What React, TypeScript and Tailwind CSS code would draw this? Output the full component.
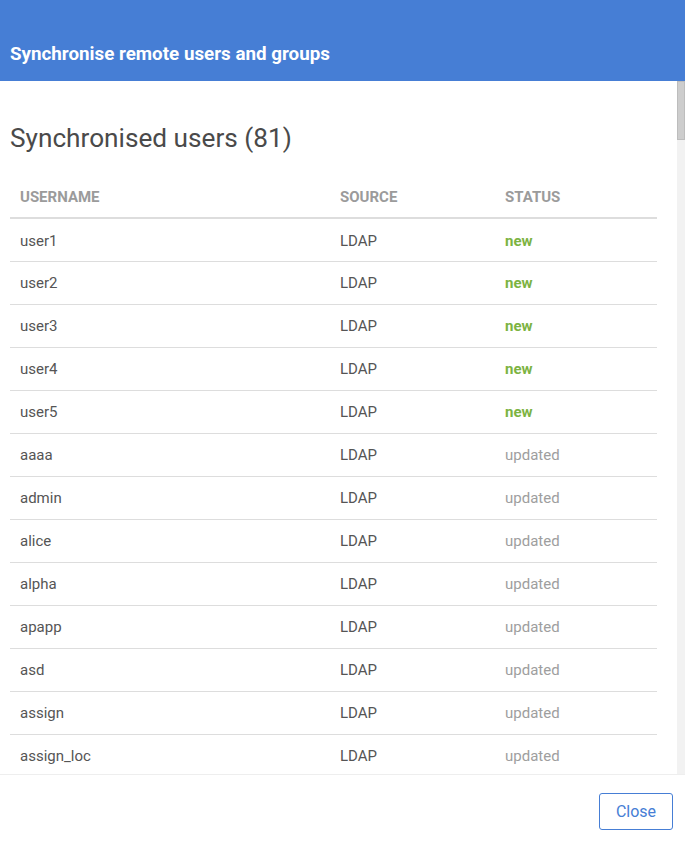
import React from "react";

type Row = { name: string; source: string; status: "new" | "updated" };

const known = [
  "aaaa", "admin", "alice", "alpha", "apapp", "asd", "assign", "assign_loc",
  "bob", "bravo", "carol", "charlie", "dave", "delta", "demo", "echo", "eve",
  "foxtrot", "frank", "golf", "grace", "guest", "heidi", "hotel", "india",
  "ivan", "judy", "juliet", "kilo", "lima", "mallory", "mike", "november",
  "oscar", "papa", "peggy", "quebec", "romeo", "sierra", "tango", "trent",
  "uniform", "victor", "walter", "whiskey", "xray", "yankee", "zulu",
];

const users: Row[] = [
  ...[1, 2, 3, 4, 5].map((i) => ({ name: `user${i}`, source: "LDAP", status: "new" as const })),
  ...Array.from({ length: 76 }, (_, i) => ({
    name: i < known.length ? known[i] : `test${i - known.length + 1}`,
    source: "LDAP",
    status: "updated" as const,
  })),
];

// only the rows that fit in the visible window are rendered
const visible = users.slice(0, 13);

export default function App() {
  return (
    <div className="flex h-[853px] w-[685px] flex-col bg-white font-['Roboto',sans-serif]">
      <div className="flex h-[81px] shrink-0 items-end bg-[#467ed5] px-[10px] pb-[16px]">
        <h1 className="text-[18.8px] leading-[21px] font-bold text-white">Synchronise remote users and groups</h1>
      </div>

      <div className="flex min-h-0 flex-1 overflow-hidden">
        <div className="min-w-0 flex-1 pt-[42px] pr-[20px] pl-[10px]">
          <h2 className="mb-[22px] text-[26.2px] leading-[30px] text-[#4a4a4a]">Synchronised users ({users.length})</h2>
          <table className="w-full border-collapse text-[15px]">
            <thead>
              <tr className="border-b-2 border-[#dddddd]">
                <th className="h-[43px] w-[320px] px-[10px] pt-[3px] text-left font-bold text-[#9b9b9b] uppercase">Username</th>
                <th className="h-[43px] w-[165px] px-[10px] pt-[3px] text-left font-bold text-[#9b9b9b] uppercase">Source</th>
                <th className="h-[43px] px-[10px] pt-[3px] text-left font-bold text-[#9b9b9b] uppercase">Status</th>
              </tr>
            </thead>
            <tbody>
              {visible.map((r) => (
                <tr key={r.name} className="border-b border-[#dddddd]">
                  <td className="h-[43px] px-[10px] pt-[2px] text-[#555555]">{r.name}</td>
                  <td className="h-[43px] px-[10px] pt-[2px] text-[#555555]">{r.source}</td>
                  <td
                    className={
                      r.status === "new"
                        ? "h-[43px] px-[10px] pt-[2px] font-bold text-[#7cb342]"
                        : "h-[43px] px-[10px] pt-[2px] text-[#9e9e9e]"
                    }
                  >
                    {r.status}
                  </td>
                </tr>
              ))}
            </tbody>
          </table>
        </div>
        <div className="w-[8px] shrink-0 bg-[#f2f2f2]">
          <div className="h-[59px] border border-[#bdbdbd] bg-[#cdcdcd]" />
        </div>
      </div>

      <div className="flex h-[79px] shrink-0 items-start justify-end border-t border-[#eeeeee] pt-[18px] pr-[12px]">
        <button className="h-[37px] w-[74px] rounded-[3px] border border-[#467ed5] bg-white text-[16px] text-[#467ed5]">
          Close
        </button>
      </div>
    </div>
  );
}
